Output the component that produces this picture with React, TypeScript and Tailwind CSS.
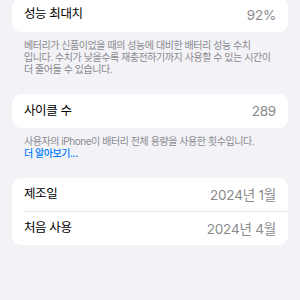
import React from 'react';

const font = { fontFamily: "Inter, 'Noto Sans CJK KR', sans-serif" };

const Row = ({ label, value, divider }: { label: string; value: string; divider?: boolean }) => (
  <div className="pl-3">
    <div className={`flex h-[33.5px] items-center justify-between pr-3 ${divider ? 'border-b border-[#e3e3e8]' : ''}`}>
      <span className="text-[12.5px] tracking-[-0.4px] text-black">{label}</span>
      <span className="text-[13.5px] tracking-[-0.2px] text-[#8a8a8e]">{value}</span>
    </div>
  </div>
);

const Note = ({ children }: { children: React.ReactNode }) => (
  <div className="px-3 pt-[7px] text-[10px] leading-[12.3px] tracking-[-0.45px] text-[#8a8a8e]">{children}</div>
);

export default function App() {
  return (
    <div style={font} className="h-[300px] w-[300px] overflow-hidden bg-[#f2f2f7] px-3">
      <div className="-mt-[2px] rounded-[9px] bg-white">
        <Row label="성능 최대치" value="92%" />
      </div>
      <Note>
        베터리가 신품이었을 때의 성능에 대비한 배터리 성능 수치
        <br />
        입니다. 수치가 낮을수록 재충전하기까지 사용할 수 있는 시간이
        <br />
        더 줄어들 수 있습니다.
      </Note>

      <div className="mt-[19px] rounded-[9px] bg-white">
        <Row label="사이클 수" value="289" />
      </div>
      <Note>
        사용자의 iPhone이 배터리 전체 용량을 사용한 횟수입니다.
        <br />
        <span className="font-medium text-[#007aff]">더 알아보기...</span>
      </Note>

      <div className="mt-[19px] rounded-[9px] bg-white">
        <Row label="제조일" value="2024년 1월" divider />
        <Row label="처음 사용" value="2024년 4월" />
      </div>
    </div>
  );
}
